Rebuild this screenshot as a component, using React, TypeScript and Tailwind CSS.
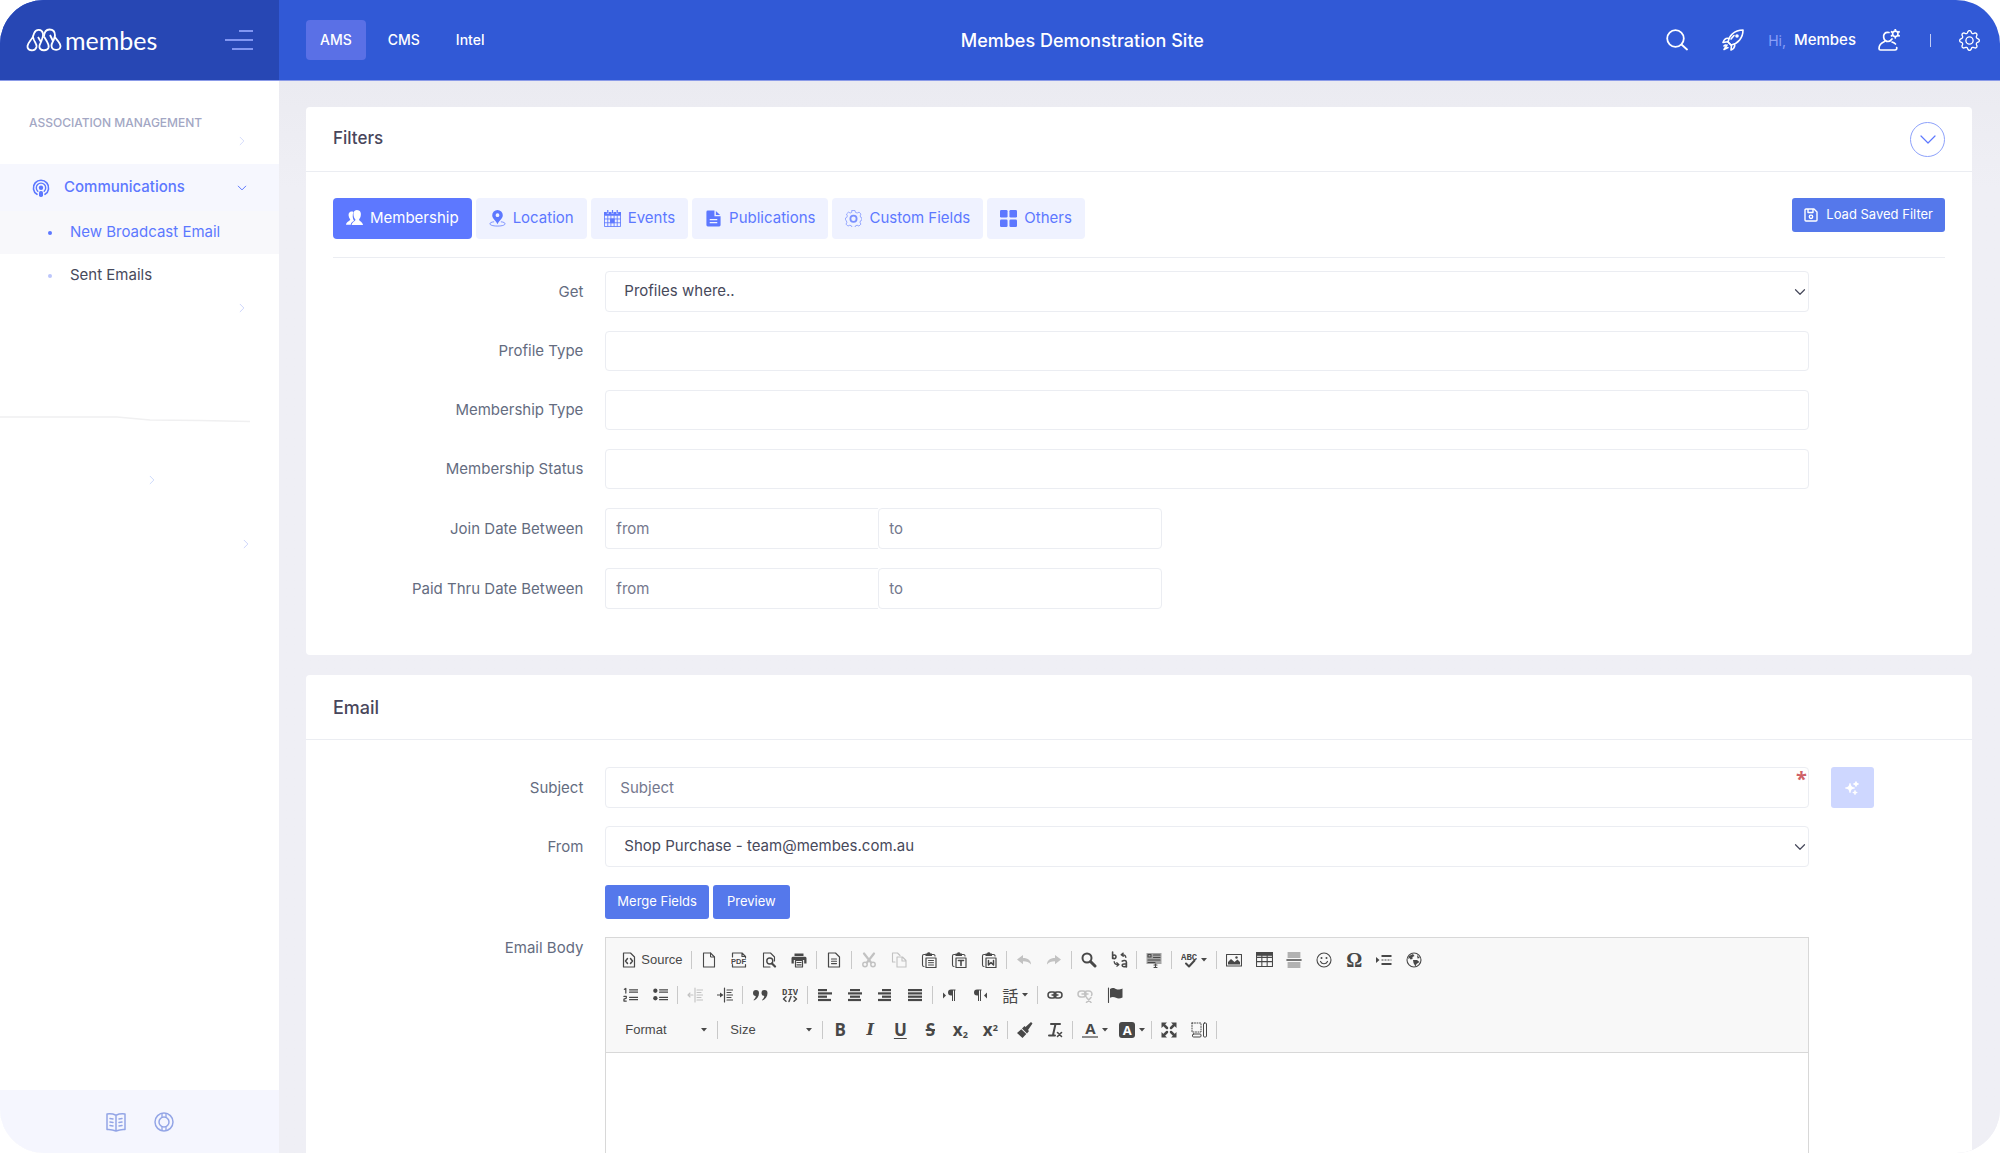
import React from 'react'
import { BsGear } from 'react-icons/bs'
import { HiSparkles } from 'react-icons/hi2'

interface IconProps {
  children: React.ReactNode
  className?: string
  box?: number
}

const Icon: React.FC<IconProps> = ({ children, className = 'size-4', box = 16 }) => (
  <svg
    viewBox={`0 0 ${box} ${box}`}
    className={`shrink-0 ${className}`}
    fill="none"
    stroke="currentColor"
    strokeLinecap="round"
    strokeLinejoin="round"
    aria-hidden="true"
  >
    {children}
  </svg>
)

const Chevron: React.FC<{ className: string; d?: string }> = ({ className, d = 'M2 5l6 6 6-6' }) => (
  <Icon className={className}>
    <path d={d} strokeWidth="1.6" />
  </Icon>
)

const right = 'M5 2l6 6-6 6'

/* ---------- top bar ---------- */

const Logo = () => (
  <a href="#" className="flex items-center gap-[3px] text-white">
    <svg viewBox="0 0 36 24" className="h-6 w-9" fill="none" stroke="currentColor" strokeWidth="1.8" strokeLinejoin="round" aria-hidden="true">
      <path d="M7 8.500 8 5.500c2-5 8-4.500 9 0 .5 3-.8 5-1.600 7.500-1 3-2.400 4-2 6 .6 4 7.800 4.500 9.200.5.6-2-.6-4-1.800-6.200L18 8.500" />
      <path d="M7 8.500C5.500 12 2 14.500 1.500 18c-.4 5 7.500 6 9 1 .5-3-1.500-4.500-2.500-7-.4-1.200-.8-2-1-3.500z" />
      <path d="M18 8.500c.2-4 2-7 5.500-7s5.500 2.500 5.500 6l-1.300 4.500c-1 2-2.300 3.500-2.200 6 .5 5 8.500 5 9 .5.200-4-5-7.500-5.700-10" />
      <path d="M12 9l3 5M24 7l3 6" />
    </svg>
    <span className="font-['Lato',sans-serif] text-[25px] leading-8">membes</span>
  </a>
)

const Header = () => (
  <header className="flex h-[81px] border-b border-[#8b9be8] bg-[#3159d6] text-white">
    <div className="flex w-[279px] shrink-0 items-center justify-between bg-[#2747b4] pr-[26px] pl-[26px]">
      <Logo />
      <button type="button" aria-label="Toggle menu" className="flex flex-col items-end gap-[7px]">
        <span className="h-[2px] w-[14px] bg-[#8196f2]" />
        <span className="h-[2px] w-7 bg-[#8196f2]" />
        <span className="h-[2px] w-[21px] bg-[#8196f2]" />
      </button>
    </div>
    <div className="flex flex-1 items-center justify-between pr-5 pl-[27px]">
      <nav className="flex gap-2 text-[14px] font-medium">
        <a href="#" className="rounded bg-[#5a70e6] px-[14px] py-2 leading-6">AMS</a>
        <a href="#" className="rounded px-[14px] py-2 leading-6">CMS</a>
        <a href="#" className="rounded px-[14px] py-2 leading-6">Intel</a>
      </nav>
      <h1 className="text-[18px] font-medium">Membes Demonstration Site</h1>
      <div className="flex items-center">
        <button type="button" aria-label="Search" className="mr-[34px]">
          <Icon box={22} className="size-[22px]">
            <circle cx="9.500" cy="9.500" r="8.300" strokeWidth="1.8" />
            <path d="M15.500 15.500l5.500 5" strokeWidth="1.800" />
          </Icon>
        </button>
        <button type="button" aria-label="Quick actions" className="mr-6">
          <Icon box={22} className="size-[22px]">
            <g strokeWidth="1.600">
              <path d="M6 13c1-6 6-12 15-12 0 8-5 13.500-12 15z" />
              <path d="M7 9.500c-3-.8-5 1-6 4l4.500-.8M12.500 15c.8 3-.5 4.700-3.500 6l.5-4.500" />
              <path d="M6 13l3 3M5 16l-3 4.500 4-2" />
              <path d="M3.500 16l-1.500 1M9 10l3-3.500" />
            </g>
            <circle cx="15" cy="7" r="1.800" fill="currentColor" stroke="none" />
          </Icon>
        </button>
        <span className="mr-2 text-[14px] text-[#8ba0f8]">Hi,</span>
        <span className="mr-[22px] text-[15px] font-medium">Membes</span>
        <button type="button" aria-label="Profile" className="mr-[30px]">
          <Icon box={22} className="size-[22px]">
            <g strokeWidth="1.700">
              <path d="M11 3.500c-4-.8-6 2-5.300 5C6.200 11 8 12.500 10 12.500c1.500 0 3-1 4-2.500" />
              <path d="M6.500 12.500C3 14 1 16.500 1 19.500c0 1 .5 1.500 1.500 1.500H17c1.500 0 2-1 1.700-2.500M14 13c1.500.4 2.700 1.200 3.500 2" />
            </g>
            <circle cx="17.300" cy="4.800" r="2.700" strokeWidth="1.600" />
            <path d="M17.300 1V.8M17.300 8.800v-.2M13.800 2.900l-.2-.1M21 6.800l-.2-.1M13.800 6.700l-.2.1M21 2.800l-.2.100" strokeWidth="1.900" />
          </Icon>
        </button>
        <span className="mr-[28px] h-[13px] w-px bg-[#c3cdf5]" />
        <button type="button" aria-label="Settings">
          <BsGear className="size-[21px]" />
        </button>
      </div>
    </div>
  </header>
)

/* ---------- sidebar ---------- */

const Sidebar = () => (
  <aside className="flex w-[279px] shrink-0 flex-col bg-white">
    <div className="flex-1 overflow-hidden">
      <h2 className="pt-[34px] pl-[29px] text-[12px] leading-4 font-medium text-[#a3a7c4]">ASSOCIATION MANAGEMENT</h2>
      <div className="flex h-[33px] justify-end pt-[5px] pr-8 text-[#d5dcfb]">
        <Chevron className="size-[10px]" d={right} />
      </div>
      <a href="#" className="flex h-[47px] items-center bg-[#f6f7fe] pr-8 pl-8 text-[15px] font-medium text-[#5d78ff]">
        <Icon box={18} className="size-[18px]">
          <path d="M5 15.300a7.600 7.600 0 1 1 8 0" strokeWidth="1.600" />
          <path d="M5.800 12.300a4.700 4.700 0 1 1 6.400 0" strokeWidth="1.400" />
          <circle cx="9" cy="8.700" r="2.200" fill="currentColor" stroke="none" />
          <rect x="7" y="12" width="4" height="6" rx="1.700" fill="currentColor" stroke="none" />
        </Icon>
        <span className="ml-[14px] flex-1">Communications</span>
        <Chevron className="size-[10px]" />
      </a>
      <a href="#" className="flex h-[43px] items-center bg-[#f8f8fb] pl-12 text-[15px] text-[#5d78ff]">
        <span className="mr-[18px] size-1 rounded-full bg-[#5d78ff]" />
        New Broadcast Email
      </a>
      <a href="#" className="flex h-[43px] items-center pl-12 text-[15px] text-[#47495b]">
        <span className="mr-[18px] size-1 rounded-full bg-[#bcc6fb]" />
        Sent Emails
      </a>
      <div className="flex h-[22px] items-center justify-end pr-8 text-[#cdd5fb]">
        <Chevron className="size-[10px]" d={right} />
      </div>
      <svg viewBox="0 0 279 10" className="mt-[95px] h-[10px] w-full" fill="none" stroke="#f0f0f1" strokeWidth="1.500" aria-hidden="true">
        <path d="M0 3H117L150 6L200 6.500L250 7.500" />
      </svg>
      <div className="mt-[46px] flex h-5 items-center justify-center pl-6 text-[#cddafb]">
        <Chevron className="size-[10px]" d={right} />
      </div>
      <div className="mt-11 flex h-5 items-center justify-end pr-7 text-[#cdd5fb]">
        <Chevron className="size-[10px]" d={right} />
      </div>
    </div>
    <footer className="flex h-[63px] shrink-0 items-center justify-center gap-7 bg-[#f5f6fe] text-[#93a5e6]">
      <button type="button" aria-label="Documentation">
        <Icon box={20} className="size-5">
          <g strokeWidth="1.500">
            <path d="M1 2c3-.5 6-.2 9 1.200C13 1.800 16 1.500 19 2v15.500c-3-.3-6 .2-9 1.500-3-1.300-6-1.800-9-1.500zM10 3.200V19" />
            <path d="M4 6.500l3 .5M4 10l3 .5M4 13.500l3 .500M16 6.500l-3 .5M16 10l-3 .5M16 13.500l-3 .500" />
          </g>
        </Icon>
      </button>
      <button type="button" aria-label="Support">
        <Icon box={20} className="size-5">
          <circle cx="10" cy="10" r="9" strokeWidth="1.500" />
          <circle cx="10" cy="10" r="5" strokeWidth="1.500" />
          <path d="M8 1.500v3.800M12 1.500v3.800M8 14.700v3.800M12 14.700v3.800" strokeWidth="1.300" />
        </Icon>
      </button>
    </footer>
  </aside>
)

/* ---------- filters ---------- */

const tabs = [
  {
    name: 'Membership',
    icon: (
      <g fill="currentColor" stroke="none">
        <path d="M8 2C4 .5 2 3.500 3 7c.300 1.400 1 2.300 1.500 3-.2 1.500-4 2-4.500 5.500h5c.3-2 2-3 3.500-4C7 9 6.500 5 8 2z" />
        <path d="M11.500 0c3.500 0 5 3 4 6.500-.3 1.500-1 2.500-1.700 3.500.3 2 4 2.500 4.200 6H6c.2-3.500 4-4 4-6-1-1-1.500-2-1.800-3.500C7.500 3 8.500 0 11.500 0z" />
      </g>
    )
  },
  {
    name: 'Location',
    icon: (
      <>
        <path fillRule="evenodd" d="M9 0a5.600 5.600 0 0 1 5.600 5.600C14.600 9 11 11 9 15 7 11 3.400 9 3.400 5.600A5.600 5.600 0 0 1 9 0zm0 3.500a2 2 0 1 0 0 4 2 2 0 0 0 0-4z" fill="currentColor" stroke="none" />
        <path d="M5 12.500C-1 13 -1 17 9 17s10-4 4-4.500" strokeWidth=".8" />
      </>
    )
  },
  {
    name: 'Events',
    icon: (
      <>
        <path d="M0 2h3v2h2V2h3v2h2V2h3v2h2V2h3v4H0z" fill="currentColor" stroke="none" />
        <path d="M4 0v3M9 0v3M14 0v3" strokeWidth="1.300" />
        <path d="M.5 6v11.500h17V6M.5 9.500h17M.5 13.500h17M4 6v11M7.300 6v11M10.700 6v11M14 6v11" strokeWidth=".9" />
        <path d="M7.300 9.500h3.400v4H7.300z" fill="currentColor" strokeWidth="1" />
      </>
    )
  },
  {
    name: 'Publications',
    icon: (
      <path fillRule="evenodd" d="M3 .5h7v6h6.500V16a1.500 1.500 0 0 1-1.500 1.500H3A1.500 1.500 0 0 1 1.500 16V2A1.500 1.500 0 0 1 3 .5zM11.500 1l4.500 4.200h-4.500zM5 9.500v1.300h8V9.500zm0 3.300v1.300h8v-1.300z" fill="currentColor" stroke="none" />
    )
  },
  {
    name: 'Custom Fields',
    icon: (
      <g opacity=".8">
        <path d="M7.500.5h3l.6 2 1.800.7 2-.9 2 2-.9 2 .7 1.600 1.300.6v2l-1.500.8-.6 1.700.9 2-2 2-2-.9-1.700.7-.6 1.700h-3l-.7-1.700-1.700-.7-2 .9-2-2 .9-2-.7-1.700L.5 10.500v-2l1.300-.6.7-1.600-.9-2 2-2 2 .9 1.300-.7z" strokeWidth=".8" />
        <circle cx="9" cy="9.300" r="3.300" strokeWidth="1.900" />
      </g>
    )
  },
  {
    name: 'Others',
    icon: (
      <g fill="currentColor" stroke="none">
        <rect x="0" y="0" width="8" height="8" rx="1.300" />
        <rect x="10" y="0" width="8" height="8" rx="1.300" />
        <rect x="0" y="10" width="8" height="8" rx="1.300" />
        <rect x="10" y="10" width="8" height="8" rx="1.300" />
      </g>
    )
  }
]

const field = 'w-full rounded border border-[#ebedf2] bg-white text-[15px] text-[#47495b] outline-none placeholder:text-[#74788d]'

interface RowProps {
  label: string
  id: string
  children: React.ReactNode
  extra?: React.ReactNode
  top?: boolean
}

const Row: React.FC<RowProps> = ({ label, id, children, extra, top }) => (
  <div className={`grid grid-cols-12 gap-x-[22px] ${top ? 'items-start' : 'items-center'}`}>
    <label htmlFor={id} className="col-span-2 text-right text-[15px] leading-[22px] text-[#646c7f]">{label}</label>
    <div className="col-span-9">{children}</div>
    {extra}
  </div>
)

const Select: React.FC<{ id: string; options: string[] }> = ({ id, options }) => (
  <div className="relative">
    <select id={id} className={`${field} block h-[41px] appearance-none px-[18px]`}>
      {options.map(option => (
        <option key={option}>{option}</option>
      ))}
    </select>
    <Chevron className="pointer-events-none absolute top-[15px] right-[3px] size-3 text-[#47495b]" />
  </div>
)

const DateRange: React.FC<{ id: string }> = ({ id }) => (
  <div className="flex max-w-[557px]">
    <input id={id} placeholder="from" className={`${field} h-[41px] flex-[273] rounded-r-none border-r-0 px-[10px]`} />
    <input aria-label="to" placeholder="to" className={`${field} h-[41px] flex-[284] px-[10px]`} />
  </div>
)

const Filters = () => (
  <section className="rounded bg-white pb-[46px]">
    <div className="flex h-[65px] items-center justify-between border-b border-[#ebedf2] px-[27px]">
      <h3 className="text-[17px] font-medium text-[#48465b]">Filters</h3>
      <button type="button" aria-label="Collapse" className="flex size-[35px] items-center justify-center rounded-full border border-[#8ea2fb] text-[#5d78ff]">
        <Icon className="size-4">
          <path d="M1 5l7 7 7-7" strokeWidth="1.200" />
        </Icon>
      </button>
    </div>
    <div className="px-[27px] pt-[26px]">
      <div className="flex items-start justify-between border-b border-[#ebedf2] pb-[18px]">
        <div className="flex gap-1">
          {tabs.map((tab, i) => (
            <button
              key={tab.name}
              type="button"
              className={`flex h-[41px] items-center gap-[7px] rounded px-[13px] text-[15px] ${i === 0 ? 'bg-[#5d78ff] text-white' : 'bg-[#eff2ff] text-[#5d78ff]'}`}
            >
              <Icon box={18} className="size-[17px]">{tab.icon}</Icon>
              {tab.name}
            </button>
          ))}
        </div>
        <button type="button" className="flex h-[34px] items-center gap-2 rounded-[3px] bg-[#5578eb] px-3 text-[13px] text-white">
          <Icon box={14} className="size-[14px]">
            <path d="M1 2a1 1 0 0 1 1-1h8l3 3v8a1 1 0 0 1-1 1H2a1 1 0 0 1-1-1zM4 1v3.500h5V1" strokeWidth="1.400" />
            <circle cx="7" cy="8.800" r="1.700" strokeWidth="1.400" />
          </Icon>
          Load Saved Filter
        </button>
      </div>
      <form className="mt-[13px] flex flex-col gap-[19px]">
        <Row label="Get" id="get">
          <Select id="get" options={['Profiles where..']} />
        </Row>
        <Row label="Profile Type" id="profile-type">
          <input id="profile-type" className={`${field} block h-10 px-[14px]`} />
        </Row>
        <Row label="Membership Type" id="membership-type">
          <input id="membership-type" className={`${field} block h-10 px-[14px]`} />
        </Row>
        <Row label="Membership Status" id="membership-status">
          <input id="membership-status" className={`${field} block h-10 px-[14px]`} />
        </Row>
        <Row label="Join Date Between" id="join-date">
          <DateRange id="join-date" />
        </Row>
        <Row label="Paid Thru Date Between" id="paid-thru">
          <DateRange id="paid-thru" />
        </Row>
      </form>
    </div>
  </section>
)

/* ---------- editor ---------- */

const Arrow = () => (
  <svg viewBox="0 0 6 4" className="h-1 w-[6px] shrink-0 fill-[#484848]" aria-hidden="true">
    <path d="M0 0h6L3 3.500z" />
  </svg>
)

const Sep = () => <span className="mx-[2px] h-[18px] w-px bg-[#c9c9c9]" />

interface ToolProps {
  name: string
  children: React.ReactNode
  off?: boolean
  menu?: boolean
  wide?: string
}

const Tool: React.FC<ToolProps> = ({ name, children, off, menu, wide }) => (
  <button
    type="button"
    aria-label={name}
    disabled={off}
    className={`flex h-[35px] items-center ${menu ? `gap-1 pl-[7px] ${wide ?? 'w-10'}` : 'w-[30px] justify-center'} ${off ? 'text-[#c2c2c2]' : 'text-[#484848]'}`}
  >
    {children}
    {menu && <Arrow />}
  </button>
)

const page = 'M2.500 1h7l4 4v10h-11z'
const clip = 'M4.500 2.500H3A1.500 1.500 0 0 0 1.500 4v9A1.500 1.500 0 0 0 3 14.500M11 2.500h1.500A1.500 1.500 0 0 1 14 4'

const Clipboard: React.FC<{ children: React.ReactNode }> = ({ children }) => (
  <Icon>
    <path d={clip} strokeWidth="1.100" />
    <path d="M4.500 1.500h1.500a1.800 1.500 0 0 1 3.500 0H11v2.500H4.500z" fill="currentColor" stroke="none" />
    <rect x="5" y="6" width="10" height="9.500" strokeWidth="1.200" />
    {children}
  </Icon>
)

// four bars; each entry is [x, width]
const Align: React.FC<{ bars: number[][] }> = ({ bars }) => (
  <Icon>
    <g fill="currentColor" stroke="none">
      {bars.map(([x, w], i) => (
        <rect key={i} x={x} y={2 + i * 3.300} width={w} height="2.200" />
      ))}
    </g>
  </Icon>
)

const ToolbarTop = () => (
  <div className="flex items-center">
    <button type="button" className="flex h-[35px] w-[74px] items-center gap-1 pl-[6px] text-[13px] text-[#484848]">
      <Icon>
        <path d={page} strokeWidth="1.200" />
        <path d="M6.500 6.500L4.500 9l2 2.500M9.500 6.500l2 2.500-2 2.500" strokeWidth="1.500" />
      </Icon>
      Source
    </button>
    <Sep />
    <Tool name="New Page"><Icon><path d={page} strokeWidth="1.100" /><path d="M9.500 1v4h4" strokeWidth="1" /></Icon></Tool>
    <Tool name="Export to PDF">
      <Icon>
        <path d="M1.500 5V1h9.500l3.500 3.500V6M11 1v3.500h3.500M1.500 12.500V15h13v-2.500" strokeWidth="1.200" />
        <text x="0" y="11.500" fontSize="7.500" fontWeight="700" fontFamily="Liberation Sans, sans-serif" fill="currentColor" stroke="none">PDF</text>
      </Icon>
    </Tool>
    <Tool name="Preview">
      <Icon>
        <path d="M9 15H2.500V1h7l4 4v4" strokeWidth="1.100" />
        <circle cx="8.800" cy="9" r="3" strokeWidth="1.400" />
        <path d="M11 11.500l3 3" strokeWidth="2.200" />
      </Icon>
    </Tool>
    <Tool name="Print">
      <Icon>
        <path d="M3.500 1.500h9V4h-9zM2 4.800h12A1.500 1.500 0 0 1 15.500 6v5.500h-2.300V8H2.800v3.500H.5V6A1.500 1.500 0 0 1 2 4.800z" fill="currentColor" stroke="none" />
        <path d="M4.500 8.500h7V15h-7zM6 10.500h4M6 12.800h4" strokeWidth="1.200" />
      </Icon>
    </Tool>
    <Sep />
    <Tool name="Templates"><Icon><path d={page} strokeWidth="1.200" /><path d="M5.500 7h5M5.500 9.300h5M5.500 11.600h5" strokeWidth="1.100" /></Icon></Tool>
    <Sep />
    <Tool name="Cut" off>
      <Icon>
        <path d="M3 1.500l7 9M13 1.500l-7 9" strokeWidth="2.200" />
        <circle cx="4" cy="12.500" r="2.200" strokeWidth="1.500" />
        <circle cx="12" cy="12.500" r="2.200" strokeWidth="1.500" />
      </Icon>
    </Tool>
    <Tool name="Copy" off><Icon><path d="M4 10H1.500V1h5L9 3.500M6 5h5.500L15 8.500V15H6zM11 5v4h4" strokeWidth="1.100" /></Icon></Tool>
    <Tool name="Paste"><Clipboard><path d="M7.500 8.500h5M7.500 10.700h5M7.500 13h5" strokeWidth="1" /></Clipboard></Tool>
    <Tool name="Paste as plain text"><Clipboard><path d="M7.500 8.500h5M10 8.500v5" strokeWidth="1.600" /></Clipboard></Tool>
    <Tool name="Paste from Word"><Clipboard><path d="M7.500 8.500v4.500l2.500-2.500 2.500 2.500V8.500" strokeWidth="1.500" /></Clipboard></Tool>
    <Sep />
    <Tool name="Undo" off><Icon><path d="M1 7.500L7 3v3c5 0 8 2.500 8 6.500-2-2.500-4-3.200-8-3.200v3z" fill="currentColor" stroke="none" /></Icon></Tool>
    <Tool name="Redo" off><Icon><path d="M15 7.500L9 3v3c-5 0-8 2.500-8 6.500 2-2.500 4-3.200 8-3.200v3z" fill="currentColor" stroke="none" /></Icon></Tool>
    <Sep />
    <Tool name="Find"><Icon><circle cx="6" cy="6" r="4.500" strokeWidth="2" /><path d="M9.500 9.500l4.500 4.500" strokeWidth="3" /></Icon></Tool>
    <Tool name="Replace">
      <Icon className="size-[17px]">
        <path d="M1.500 1v6M1.500 5.500a1.600 1.700 0 1 0 3.200 0 1.600 1.700 0 1 0-3.200 0M10.500 9.500c1.500-1 4-.8 4 1V15M14.500 12c-2 0-4 0-4 1.500s3 2 4 .3" strokeWidth="1.500" />
        <path d="M14 6c-.3-1.800-1.500-2.500-3.500-2.500M11.500 2l-2 1.500 2 1.500M3 10c.2 2 1.500 2.800 3.500 2.800M5.500 11l2 1.800-2 1.500" strokeWidth="1.200" />
      </Icon>
    </Tool>
    <Sep />
    <Tool name="Select All">
      <Icon>
        <path d="M.5 1h15v11H.5z" fill="#a5a5a5" stroke="none" />
        <path d="M2 2.500h3v2.500H2zM7.500 3H14M7.500 5.500H14M2 8h12M2 10.500h7M8 13h3M9.500 12v3.500M8 15.500h3" strokeWidth="1.100" />
      </Icon>
    </Tool>
    <Sep />
    <Tool name="Spell Check As You Type" menu>
      <Icon>
        <text x="0" y="7.500" fontSize="9" fontWeight="700" fontFamily="Liberation Mono, monospace" fill="currentColor" stroke="none">ABC</text>
        <path d="M5 11.500l3 3 5.500-6" strokeWidth="2" />
      </Icon>
    </Tool>
    <Sep />
    <Tool name="Image"><Icon><path d="M.5 2.500h15v11.500H.5z" strokeWidth="1.100" /><path d="M2 12.500V10l3-3 3.500 3 3-2.500L14 10v2.500z" fill="currentColor" stroke="none" /><circle cx="10.500" cy="5.500" r="1.200" fill="currentColor" stroke="none" /></Icon></Tool>
    <Tool name="Table"><Icon className="size-[17px]"><path d="M.5 1.500h15v13H.5zM.5 6h15M.5 10h15M5.500 4v10.500M10.500 4v10.500" strokeWidth="1" /><path d="M.5 1.500h15V4H.5z" fill="currentColor" strokeWidth="1" /></Icon></Tool>
    <Tool name="Horizontal Line"><Icon><path d="M2 1h12M2 3h12M2 5h12M2 11h12M2 13h12M2 15h12" strokeWidth=".8" /><path d="M1 8h14" strokeWidth="1.600" /></Icon></Tool>
    <Tool name="Smiley"><Icon><circle cx="8" cy="8" r="7" strokeWidth="1.100" /><circle cx="5.500" cy="6" r="1" fill="currentColor" stroke="none" /><circle cx="10.500" cy="6" r="1" fill="currentColor" stroke="none" /><path d="M4.500 9.500c1.500 3 5.500 3 7 0" strokeWidth="1.200" /></Icon></Tool>
    <Tool name="Special Character"><span className="font-['Liberation_Serif',serif] text-[20px] leading-5 font-bold">Ω</span></Tool>
    <Tool name="Page Break"><Icon><path d="M0 5v6l3.500-3z" fill="currentColor" stroke="none" /><path d="M5.500 4h10M5.500 12h10" strokeWidth="2.200" strokeLinecap="butt" /><path d="M5.500 8h10" strokeWidth="1" strokeDasharray="2 1" strokeLinecap="butt" /></Icon></Tool>
    <Tool name="IFrame"><Icon><circle cx="8" cy="8" r="7" strokeWidth="1.100" /><path d="M3 4l4-2 1.500 2-2 1v2l-2 .5-1-1.500-1.500 1zM7 8l4 0 2.500 2-3 2-1 2.500-2-3.500zM11 3l3 3-2.500.5z" fill="currentColor" stroke="none" /></Icon></Tool>
  </div>
)

const ToolbarMiddle = () => (
  <div className="flex items-center">
    <Tool name="Numbered List">
      <Icon className="size-[15px]">
        <path d="M7 3h9M7 5.500h9M7 11h9M7 13.500h9M1.500 2.500L3 1.500V6.500M1 10h2.500v2L1 13v2h2.500" strokeWidth="1.300" />
      </Icon>
    </Tool>
    <Tool name="Bulleted List"><Icon className="size-[15px]"><circle cx="2.500" cy="4" r="2.300" fill="currentColor" stroke="none" /><circle cx="2.500" cy="12" r="2.300" fill="currentColor" stroke="none" /><path d="M7 3h9M7 5.500h9M7 11h9M7 13.500h9" strokeWidth="1.200" /></Icon></Tool>
    <Sep />
    <Tool name="Decrease Indent" off><Icon><path d="M8 1v14M10 3h6M10 5.500h4M10 8h6M10 10.500h4M10 13h6M1 8h5M3 6L1 8l2 2" strokeWidth="1.100" /></Icon></Tool>
    <Tool name="Increase Indent"><Icon><path d="M7.500 1v14M10 3h6M10 5.500h4M10 8h6M10 10.500h4M10 13h6M0 8h4" strokeWidth="1.200" /><path d="M3 5.500v5L6.500 8z" fill="currentColor" stroke="none" /></Icon></Tool>
    <Sep />
    <Tool name="Block Quote"><Icon><path d="M1 6a3 3 0 1 1 6 0c0 3.500-2 6-5 7.500L1.500 13c1.500-1.200 2.200-2.500 2.300-4C2 9 1 7.700 1 6zM9.500 6a3 3 0 1 1 6 0c0 3.500-2 6-5 7.500L10 13c1.500-1.200 2.200-2.500 2.300-4-1.800 0-2.800-1.300-2.800-3z" fill="currentColor" stroke="none" /></Icon></Tool>
    <Tool name="Create Div Container">
      <Icon>
        <text x="0" y="7.500" fontSize="9" fontWeight="700" fontFamily="Liberation Mono, monospace" fill="currentColor" stroke="none">DIV</text>
        <path d="M4 9.800L1.500 12 4 14.200M12 9.800l2.500 2.200-2.500 2.200M9 9.500L7 14.500" strokeWidth="1.500" />
      </Icon>
    </Tool>
    <Sep />
    <Tool name="Align Left"><Align bars={[[1, 9], [1, 14], [1, 9], [1, 13]]} /></Tool>
    <Tool name="Center"><Align bars={[[3, 10], [1, 14], [3, 10], [1, 13]]} /></Tool>
    <Tool name="Align Right"><Align bars={[[5, 9], [1, 13], [5, 9], [1, 13]]} /></Tool>
    <Tool name="Justify"><Align bars={[[1, 14], [1, 14], [1, 14], [1, 14]]} /></Tool>
    <Sep />
    <Tool name="Text direction from left to right"><Icon><path d="M1 5.500v6L4 8.500z" fill="currentColor" stroke="none" /><path d="M13.500 2.500H9a3 3 0 0 0 0 6h1V14h1V3.500h1V14h1V3.500h.5z" fill="currentColor" stroke="none" /></Icon></Tool>
    <Tool name="Text direction from right to left"><Icon><path d="M15 5.500v6l-3-3z" fill="currentColor" stroke="none" /><path d="M9.500 2.500H5a3 3 0 0 0 0 6h1V14h1V3.500h1V14h1V3.500h.5z" fill="currentColor" stroke="none" /></Icon></Tool>
    <Tool name="Set language" menu><span className="font-['Noto_Sans_CJK_JP',sans-serif] text-[16px] leading-4">話</span></Tool>
    <Sep />
    <Tool name="Link"><Icon><rect x="1" y="5" width="8" height="6" rx="3" strokeWidth="1.500" /><rect x="7" y="5" width="8" height="6" rx="3" strokeWidth="1.500" /><path d="M5 8h6" strokeWidth="1.300" /></Icon></Tool>
    <Tool name="Unlink" off><Icon><rect x="1" y="4" width="8" height="6" rx="3" strokeWidth="1.500" /><path d="M9 9.500C7 8 7 4 10 4h2c2.500 0 3.500 2.500 2.500 4.500M5 7h6M9.500 10.500l4.500 5M14 10.500l-4.500 5" strokeWidth="1.500" /></Icon></Tool>
    <Tool name="Anchor"><Icon><path d="M1.500 1v14.500" strokeWidth="1.100" /><path d="M3 2c2.500-2 4.500-.8 6 0s3.500 1 6.500-.5v9c-3 1.500-5 1-6.500.3s-3.500-1.600-6 0z" fill="currentColor" stroke="none" /></Icon></Tool>
  </div>
)

const Combo: React.FC<{ name: string }> = ({ name }) => (
  <label className="relative flex h-[35px] w-[100px] items-center justify-end pr-2">
    <select aria-label={name} className="absolute inset-0 appearance-none bg-transparent pl-[10px] text-[13px] text-[#484848] outline-none">
      <option>{name}</option>
    </select>
    <Arrow />
  </label>
)

const glyph = "font-['Open_Sans',sans-serif] text-[17px] leading-5 font-bold"

const ToolbarBottom = () => (
  <div className="flex items-center">
    <Combo name="Format" />
    <Sep />
    <Combo name="Size" />
    <Sep />
    <Tool name="Bold"><span className={glyph}>B</span></Tool>
    <Tool name="Italic"><span className="font-['DejaVu_Serif',serif] text-[16px] leading-5 font-bold italic">I</span></Tool>
    <Tool name="Underline"><span className={`${glyph} underline decoration-1 underline-offset-2`}>U</span></Tool>
    <Tool name="Strikethrough"><span className={`${glyph} line-through decoration-2`}>S</span></Tool>
    <Tool name="Subscript"><span className={glyph}>x<sub className="text-[9px]">2</sub></span></Tool>
    <Tool name="Superscript"><span className={glyph}>x<sup className="text-[9px]">2</sup></span></Tool>
    <Sep />
    <Tool name="Copy Formatting"><Icon><path d="M15.500 1.500L14 0 8.500 5l-1-1L5 6.500 10 11.500 12 9l-1-1zM4.300 7.200L0 11l5.500 5 3.800-4z" fill="currentColor" stroke="none" /></Icon></Tool>
    <Tool name="Remove Format">
      <Icon><path d="M4 2h9M8.500 2L6 13M2 13.500h6" strokeWidth="2" /><path d="M10.500 10.500l4 4M14.500 10.500l-4 4" strokeWidth="1.600" /></Icon>
    </Tool>
    <Sep />
    <Tool name="Text Color" menu wide="w-[37px]"><span className="w-4 border-b-2 border-[#8c8c8c] text-center font-['Open_Sans',sans-serif] text-[15px] leading-[15px] font-bold">A</span></Tool>
    <Tool name="Background Color" menu wide="w-[37px]"><span className="size-4 rounded-[3px] bg-[#484848] text-center font-['Open_Sans',sans-serif] text-[13px] leading-4 font-bold text-white">A</span></Tool>
    <Sep />
    <Tool name="Maximize">
      <Icon>
        <path d="M.5.500h5.500L.5 6zM15.500.500V6L10 .5zM.5 15.500V10L6 15.500zM15.500 15.500H10l5.500-5.500z" fill="currentColor" stroke="none" />
        <path d="M3 3l3 3M13 3l-3 3M3 13l3-3M13 13l-3-3" strokeWidth="2.500" />
      </Icon>
    </Tool>
    <Tool name="Show Blocks"><Icon><path d="M1 1h9v9H1z" strokeWidth="1" strokeDasharray="1 1.500" /><rect x="12.500" y="1" width="3" height="14" rx="1" strokeWidth="1" /><rect x="1.500" y="12" width="8.500" height="3" rx="1" strokeWidth="1" /></Icon></Tool>
    <Sep />
  </div>
)

const Email = () => (
  <section className="rounded bg-white">
    <div className="flex h-[65px] items-center border-b border-[#ebedf2] px-[27px]">
      <h3 className="text-[18px] font-medium text-[#48465b]">Email</h3>
    </div>
    <form className="flex flex-col gap-[18px] px-[27px] pt-[27px]">
      <Row
        label="Subject"
        id="subject"
        extra={
          <button type="button" aria-label="Write with AI" className="flex h-[41px] w-[43px] items-center justify-center rounded-[3px] bg-[#ced7ff] text-white">
            <HiSparkles className="size-4" />
          </button>
        }
      >
        <div className="relative">
          <input id="subject" placeholder="Subject" className={`${field} block h-[41px] px-[14px]`} />
          <span className="absolute top-0 right-[2px] font-['Open_Sans',sans-serif] text-[20px] leading-6 font-bold text-[#cf6168]">*</span>
        </div>
      </Row>
      <Row label="From" id="from">
        <Select id="from" options={['Shop Purchase - team@membes.com.au']} />
      </Row>
      <div className="grid grid-cols-12 gap-x-[22px]">
        <div className="col-span-9 col-start-3 flex gap-1">
          <button type="button" className="h-[34px] rounded-[3px] bg-[#5578eb] px-3 text-[13px] text-white">Merge Fields</button>
          <button type="button" className="h-[34px] rounded-[3px] bg-[#5578eb] px-[14px] text-[13px] text-white">Preview</button>
        </div>
      </div>
      <Row label="Email Body" id="email-body" top>
        <div className="border border-[#d8d8d8] font-['Liberation_Sans',sans-serif]">
          <div className="border-b border-[#d8d8d8] bg-[#f8f8f8] px-[9px] pt-1 pb-[5px]">
            <ToolbarTop />
            <ToolbarMiddle />
            <ToolbarBottom />
          </div>
          <textarea id="email-body" className="block h-[260px] w-full resize-none bg-white p-4 text-[14px] outline-none" />
        </div>
      </Row>
    </form>
  </section>
)

export default function App() {
  return (
    <div className="h-screen bg-white font-['Inter',sans-serif]">
      <div className="flex h-full flex-col overflow-hidden rounded-[44px] bg-[#efeff5]">
        <Header />
        <div className="flex min-h-0 flex-1">
          <Sidebar />
          <main className="flex flex-1 flex-col gap-5 overflow-hidden bg-linear-to-b from-[#ebebf1] to-[#efeff5] to-10% pt-[26px] pr-7 pl-[27px] *:shrink-0">
            <Filters />
            <Email />
          </main>
        </div>
      </div>
    </div>
  )
}
